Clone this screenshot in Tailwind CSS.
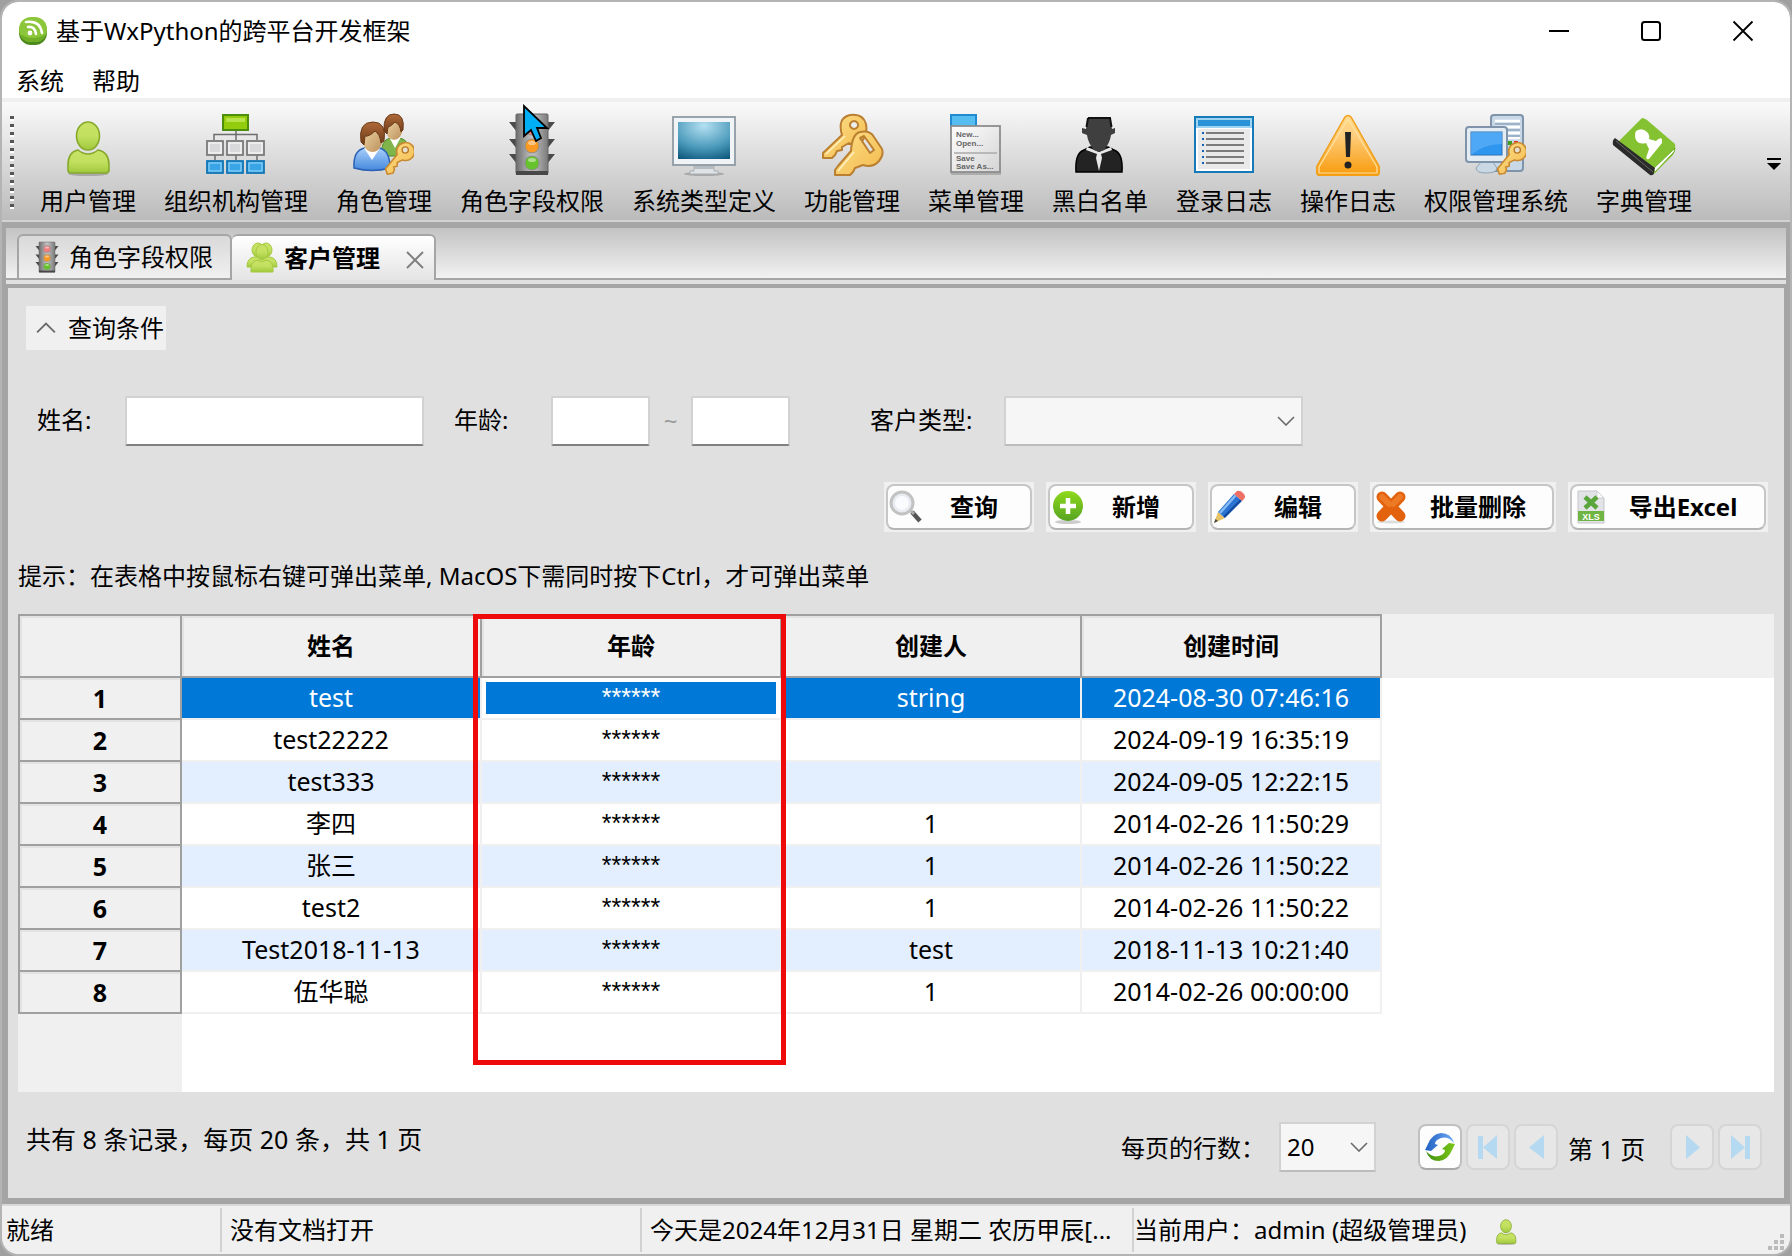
<!DOCTYPE html>
<html lang="zh-CN">
<head>
  <meta charset="utf-8">
  <title>基于WxPython的跨平台开发框架</title>
  <script src="https://cdn.jsdelivr.net/npm/@tailwindcss/browser@4"></script>
</head>
<body class="bg-[#a0a0a0] font-['Noto_Sans','Noto_Sans_CJK_SC',sans-serif] text-2xl leading-8 text-black">

  <!-- shared gradients and icons -->
  <svg class="absolute w-0 h-0" aria-hidden="true">
    <defs>
      <linearGradient id="gGreen" x1="0" y1="0" x2="0" y2="1"><stop offset="0" stop-color="#c9e265"/><stop offset=".5" stop-color="#c3e060"/><stop offset="1" stop-color="#a0c93c"/></linearGradient>
      <linearGradient id="gBlue" x1="0" y1="0" x2="0" y2="1"><stop offset="0" stop-color="#a9d0fb"/><stop offset="1" stop-color="#4387dc"/></linearGradient>
      <linearGradient id="gHair" x1="0" y1="0" x2="0" y2="1"><stop offset="0" stop-color="#b06a3a"/><stop offset="1" stop-color="#6b3a17"/></linearGradient>
      <linearGradient id="gFace" x1="0" y1="0" x2="1" y2="1"><stop offset="0" stop-color="#f3d9ac"/><stop offset="1" stop-color="#b98f58"/></linearGradient>
      <linearGradient id="gKey" x1="0" y1="0" x2="1" y2="1"><stop offset="0" stop-color="#fde08a"/><stop offset="1" stop-color="#f3b94c"/></linearGradient>
      <linearGradient id="gMetal" x1="0" y1="0" x2="1" y2="0"><stop offset="0" stop-color="#6d6d6d"/><stop offset=".5" stop-color="#c4c4c4"/><stop offset="1" stop-color="#7b7b7b"/></linearGradient>
      <radialGradient id="gScreen" cx=".5" cy=".1" r="1"><stop offset="0" stop-color="#b5e0f2"/><stop offset=".6" stop-color="#4b9abb"/><stop offset="1" stop-color="#0d587d"/></radialGradient>
      <linearGradient id="gWarn" x1="0" y1="0" x2="0" y2="1"><stop offset="0" stop-color="#ffd98a"/><stop offset=".3" stop-color="#ffcf80"/><stop offset="1" stop-color="#f79a0a"/></linearGradient>
      <linearGradient id="gPage" x1="0" y1="0" x2="1" y2="1"><stop offset="0" stop-color="#fff"/><stop offset="1" stop-color="#d4d4d4"/></linearGradient>
      <linearGradient id="gDisc" x1="0" y1="0" x2="0" y2="1"><stop offset="0" stop-color="#8fd91c"/><stop offset="1" stop-color="#56a322"/></linearGradient>
      <linearGradient id="gArrowBlue" x1="0" y1="0" x2="1" y2="0"><stop offset="0" stop-color="#1f5fc0"/><stop offset="1" stop-color="#6eaaf5"/></linearGradient>
      <linearGradient id="gArrowGreen" x1="0" y1="0" x2="1" y2="0"><stop offset="0" stop-color="#7cc818"/><stop offset="1" stop-color="#3f8d12"/></linearGradient>
    </defs>
    <symbol id="user" viewBox="0 0 64 64">
      <ellipse cx="32" cy="62" rx="20" ry="2" fill="#000" opacity=".2"/>
      <path d="M22 38 Q32 46 42 38 Q53 40 53 53 V58 Q53 61 50 61 H15 Q12 61 12 58 V53 Q12 40 22 38Z" fill="url(#gGreen)" stroke="#86a92c" stroke-width="1.6"/>
      <ellipse cx="32" cy="24" rx="11.5" ry="14" fill="url(#gGreen)" stroke="#86a92c" stroke-width="1.6"/>
    </symbol>
    <symbol id="traffic" viewBox="0 0 64 64">
      <g fill="#4a4a4a"><path d="M9 10 H17 V20 Z M9 27 H17 V37 Z M9 42 H17 V52 Z M55 10 H47 V20 Z M55 27 H47 V37 Z M55 42 H47 V52 Z"/></g>
      <rect x="16" y="2" width="32" height="60" rx="1" fill="url(#gMetal)" stroke="#666"/>
      <rect x="16" y="59" width="32" height="4" fill="#484848"/>
      <g stroke="#8b8b8b"><circle cx="32" cy="16" r="7" fill="#f08080"/><circle cx="32" cy="34" r="7" fill="#fb9a22"/><circle cx="32" cy="51" r="7" fill="#66c32c"/></g>
      <g fill="#fff" opacity=".45"><ellipse cx="32" cy="13" rx="4" ry="2"/><ellipse cx="32" cy="31" rx="4" ry="2"/><ellipse cx="32" cy="48" rx="4" ry="2"/></g>
    </symbol>
    <symbol id="key" viewBox="0 0 32 38">
      <path d="M14 14 L1 30 L3 36 L9 35 L11 31 L10 28 L14 27 L14 23 L20 20 A10 10 0 1 0 14 14Z" fill="url(#gKey)" stroke="#c98a31" stroke-width="1.8" stroke-linejoin="round"/>
      <circle cx="23" cy="9" r="3.5" fill="#e8e0cf" stroke="#b97a2c" stroke-width="1.5"/>
    </symbol>
    <symbol id="chevron" viewBox="0 0 18 10"><path d="M1 1 L9 9 L17 1" fill="none" stroke="#6a6a6a" stroke-width="1.6"/></symbol>
  </svg>

  <div class="min-h-screen p-0.5 flex">
    <div class="flex-1 min-w-0 flex flex-col rounded-2xl overflow-hidden bg-white outline-2 outline-[#b4b4b4]">

      <!-- title bar -->
      <header class="h-[58px] flex items-center justify-between pl-4 pr-9">
        <div class="flex items-center gap-2">
          <svg class="w-[30px] h-[30px]" viewBox="0 0 30 30">
            <rect x="1" y="3" width="28" height="26" rx="12" fill="#4d8a1d"/>
            <rect x="1" y="1" width="28" height="25" rx="12" fill="#8cc63a"/>
            <path d="M2 18 Q15 26 28 18 Q26 26 15 26 Q4 26 2 18Z" fill="#6fae25"/>
            <circle cx="12" cy="17" r="2.4" fill="#fff"/>
            <path d="M10 11 Q17 10 18 18 M8 6 Q22 4 24 17" fill="none" stroke="#fff" stroke-width="2.6" stroke-linecap="round"/>
          </svg>
          <h1>基于WxPython的跨平台开发框架</h1>
        </div>
        <div class="flex gap-[70px]">
          <button aria-label="最小化"><svg class="w-[22px] h-[22px]" viewBox="0 0 22 22"><path d="M1 11 H21" stroke="#000" stroke-width="2"/></svg></button>
          <button aria-label="最大化"><svg class="w-[22px] h-[22px]" viewBox="0 0 22 22"><rect x="2" y="2" width="18" height="18" rx="2.5" fill="none" stroke="#000" stroke-width="2"/></svg></button>
          <button aria-label="关闭"><svg class="w-[22px] h-[22px]" viewBox="0 0 22 22"><path d="M1.500 1.500 L20.500 20.500 M20.500 1.500 L1.500 20.500" stroke="#000" stroke-width="1.8"/></svg></button>
        </div>
      </header>

      <!-- menu bar -->
      <nav class="h-[42px] flex items-center gap-7 px-3.5 pt-1 border-b-4 border-[#f0f0f0]">
        <button>系统</button>
        <button>帮助</button>
      </nav>

      <!-- tool bar -->
      <div class="h-[120px] flex items-start bg-linear-to-b from-[#fafafa] to-[#bbbbbb] border-b-2 border-[#d2d2d2] pt-2.5">
        <div class="w-2 h-24 mt-1 ml-2 mr-2 bg-[repeating-linear-gradient(to_bottom,#555_0px,#555_3px,#fff_3px,#fff_5px,transparent_5px,transparent_8px)] border-r-4 border-transparent bg-clip-padding"></div>

        <button class="px-3.5 flex flex-col items-center gap-[9px]"><svg class="size-16"><use href="#user"/></svg>用户管理</button>

        <button class="px-3.5 flex flex-col items-center gap-[9px]">
          <svg class="size-16" viewBox="0 0 64 64">
            <path d="M32 18 V28 M10 28 V22.500 H53 V28 M11 43 V48 M32 43 V48 M53 43 V48" fill="none" stroke="#6d6d6d" stroke-width="1.5"/>
            <rect x="19" y="3" width="25" height="15" fill="#93cc0c" stroke="#4d8f0c" stroke-width="2"/><rect x="22" y="6" width="19" height="4" fill="#b9e34a"/>
            <g fill="#d9d9dc" stroke="#7b7b7b" stroke-width="1.8"><rect x="3" y="29" width="16" height="14"/><rect x="23" y="29" width="16" height="14"/><rect x="43" y="29" width="17" height="14"/></g>
            <g fill="none" stroke="#fff"><rect x="5" y="31" width="12" height="10"/><rect x="25" y="31" width="12" height="10"/><rect x="45" y="31" width="13" height="10"/></g>
            <g fill="#3aa5e6" stroke="#1576b4" stroke-width="1.8"><rect x="3" y="49" width="16" height="12"/><rect x="23" y="49" width="16" height="12"/><rect x="43" y="49" width="17" height="12"/></g>
            <g fill="none" stroke="#9bdafc"><rect x="5" y="51" width="12" height="8"/><rect x="25" y="51" width="12" height="8"/><rect x="45" y="51" width="13" height="8"/></g>
          </svg>组织机构管理</button>

        <button class="px-3.5 flex flex-col items-center gap-[9px]">
          <svg class="size-16" viewBox="0 0 64 64">
            <path d="M29 44 Q29 28 38 26 L43 32 L48 26 Q58 28 58 44Z" fill="#7fb54a" stroke="#4f8a25"/>
            <path d="M37 25 L43 36 L49 25Z" fill="#fff"/>
            <ellipse cx="42" cy="17" rx="8.500" ry="11" fill="url(#gFace)"/>
            <path d="M32 19 Q31 2 42 2 Q53 2 51 18 L49 20 Q48 12 43 10 Q38 15 36 15 L35 22Z" fill="url(#gHair)" stroke="#6b3a17"/>
            <path d="M2 56 Q1 38 13 36 L20 44 L27 36 Q38 38 38 56 Q20 61 2 56Z" fill="url(#gBlue)" stroke="#2b62b5" stroke-width="1.5"/>
            <path d="M12 36 L20 48 L28 36Z" fill="#fff"/>
            <ellipse cx="20.500" cy="27" rx="10" ry="13" fill="url(#gFace)"/>
            <path d="M9 30 Q6 10 21 10 Q35 10 32 29 L29 31 Q28 22 23 19 Q17 25 13 24 L12 33Z" fill="url(#gHair)" stroke="#6b3a17"/>
            <use href="#key" x="32" y="30" width="30" height="34"/>
          </svg>角色管理</button>

        <button class="relative px-3.5 flex flex-col items-center gap-[9px]">
          <svg class="size-16"><use href="#traffic"/></svg>角色字段权限
          <svg class="absolute left-[76px] -top-2 w-[28px] h-[40px]" viewBox="0 0 28 40"><path d="M2 2 L2 32 L9 26 L14 37 L19 34 L15 24 L25 24 Z" fill="#00aef5" stroke="#000" stroke-width="1.8"/></svg>
        </button>

        <button class="px-3.5 flex flex-col items-center gap-[9px]">
          <svg class="size-16" viewBox="0 0 64 64">
            <ellipse cx="32" cy="62" rx="20" ry="2" fill="#000" opacity=".2"/>
            <path d="M22 52 H42 V59 H46 V62 H18 V59 H22Z" fill="#dfe3e6" stroke="#a8afb4"/>
            <path d="M22 53 H42 V57 H22Z" fill="#b5bcc1"/>
            <rect x="1" y="5" width="62" height="48" fill="#f1f4f6" stroke="#8f9ba3" stroke-width="1.8"/>
            <rect x="6" y="10" width="52" height="37" fill="url(#gScreen)"/>
          </svg>系统类型定义</button>

        <button class="px-3.5 flex flex-col items-center gap-[9px]">
          <svg class="size-16" viewBox="0 0 64 64">
            <g stroke="#bb7f32" stroke-width="2" stroke-linejoin="round" fill="url(#gKey)" fill-rule="evenodd">
              <path d="M22 23 Q17 6 30 3 Q43 1 46 12 Q48 24 40 31 Q34 34 29 31 L22 35 V38 L17 39 L15 43 L12 46 H3 V41Z M34 9 A4 4 0 1 0 34.100 9Z"/>
              <path d="M31 39 Q32 22 40 20 Q50 18 54 25 L62 37 Q64 43 59 49 Q53 56 43 53 L35 56 L33 60 L30 63 H15 V58 L18 54Z M40 26 L44 24 L54 38 L50 41Z"/>
            </g>
            <path d="M34 40 L18 59 M25 24 L6 42" stroke="#fff2c0" stroke-width="1.5"/>
          </svg>功能管理</button>

        <button class="px-3.5 flex flex-col items-center gap-[9px]">
          <svg class="size-16" viewBox="0 0 64 64">
            <rect x="7" y="59" width="50" height="4" fill="#000" opacity=".18"/>
            <rect x="7" y="3" width="25" height="13" fill="#55bdf0" stroke="#1f8bd0" stroke-width="2"/>
            <rect x="7" y="14" width="49" height="46" fill="url(#gPage)" stroke="#8d8d8d" stroke-width="1.8"/>
            <path d="M10 41 H53" stroke="#aaa" stroke-width="1.5"/>
            <g font-family="Liberation Sans, sans-serif" font-size="8" font-weight="bold" fill="#666"><text x="12" y="25">New...</text><text x="12" y="34">Open...</text><text x="12" y="49">Save</text><text x="12" y="57">Save As...</text></g>
          </svg>菜单管理</button>

        <button class="px-3.5 flex flex-col items-center gap-[9px]">
          <svg class="size-16" viewBox="0 0 64 64">
            <path d="M8 60 Q7 43 14 39 L22 35 H40 L48 39 Q55 43 54 60Z" fill="#232323" stroke="#000" stroke-width="1.500"/>
            <path d="M19 35 L31 40 L43 35 L44 38 L33 42 L34 46 L31 59 L28 46 L29 42 L18 38Z" fill="#e8e8e8"/>
            <path d="M20 6 H42 L44 17 L47 16 V21 L43 23 Q42 31 36 38 L31 40 L26 38 Q20 31 19 23 L14 21 V16 L18 17Z" fill="#3f3f3f"/>
            <path d="M20 6 H42 L43.500 15 M20 6 L18.500 15" fill="none" stroke="#111" stroke-width="2"/>
          </svg>黑白名单</button>

        <button class="px-3.5 flex flex-col items-center gap-[9px]">
          <svg class="size-16" viewBox="0 0 64 64">
            <rect x="3" y="5" width="58" height="55" fill="#fff" stroke="#1679b8" stroke-width="2"/>
            <rect x="4" y="6" width="56" height="10" fill="#9dd3f3"/><rect x="6" y="8" width="52" height="6" fill="#2a93d8"/>
            <rect x="6" y="17" width="52" height="40" fill="#e9e9e9"/>
            <path d="M14 21 H52 M14 27 H52 M14 33 H52 M14 39 H52 M14 45 H52 M14 51 H52" stroke="#7c7c7c" stroke-width="1.8"/>
            <path d="M10 21 H12 M10 27 H12 M10 33 H12 M10 39 H12 M10 45 H12 M10 51 H12" stroke="#1461ad" stroke-width="2"/>
          </svg>登录日志</button>

        <button class="px-3.5 flex flex-col items-center gap-[9px]">
          <svg class="size-16" viewBox="0 0 64 64">
            <path d="M29 5 Q32 2 35 5 L63 54 Q65 63 60 64 H4 Q-1 63 1 54Z" fill="url(#gWarn)" stroke="#f1a01c" stroke-width="1.5"/>
            <path d="M32 7 L61 55 V61 H3 V55Z" fill="none" stroke="#ffe2a0" stroke-width="1.2"/>
            <path d="M29 20 H35 L34 45 H30Z" fill="#222"/><circle cx="32" cy="53" r="3.500" fill="#222"/>
          </svg>操作日志</button>

        <button class="px-3.5 flex flex-col items-center gap-[9px]">
          <svg class="size-16" viewBox="0 0 64 64">
            <rect x="27" y="3" width="32" height="56" rx="3" fill="#c8d8e7" stroke="#7f93ab" stroke-width="2"/>
            <path d="M31 9 H56 M31 15 H56 M31 21 H56 M40 26 H56" stroke="#fff" stroke-width="2.500"/><path d="M31 12 H56 M31 18 H56 M40 24 H56" stroke="#8fa5bd" stroke-width="1.500"/>
            <rect x="44" y="29" width="4" height="4" fill="#3d9d1e"/><rect x="50" y="29" width="4" height="4" fill="#e0312b"/>
            <path d="M18 49 H28 L33 56 Q33 61 22 61 Q12 61 12 56Z" fill="#c9d8e2" stroke="#8da3b3"/>
            <rect x="2" y="15" width="41" height="35" rx="3" fill="#e4ecf3" stroke="#7f93ab" stroke-width="2"/>
            <rect x="7" y="20" width="31" height="23" fill="#2f96ef" stroke="#2b6eb8"/><path d="M7 20 H38 V32 Q20 32 7 43Z" fill="#65b4f8" opacity=".6"/>
            <use href="#key" x="32" y="30" width="30" height="34"/>
          </svg>权限管理系统</button>

        <button class="px-3.5 flex flex-col items-center gap-[9px]">
          <svg class="size-16" viewBox="0 0 64 64">
            <path d="M30 6 Q32 6 35 8 L63 32 Q64 40 60 44 L42 62 L4 32Z" fill="#85c232"/>
            <path d="M41 57 L63 36 L62 40 L43 60Z" fill="#fff" stroke="#6fae25"/>
            <path d="M3 26 Q0 28 1 33 L38 63 Q42 64 42 60 L43 56Z" fill="#2b2b2b"/><path d="M4 29 L41 60" stroke="#666"/>
            <path d="M24 19 Q30 15 35 20 Q38 23 37 27 L44 29 Q48 25 50 27 L50 31 L37 47 Q33 48 35 43 L37 37 L34 31 Q27 33 24 28 Q22 23 24 19Z" fill="#fff"/>
          </svg>字典管理</button>

        <button class="ml-auto mr-2 mt-11 mb-auto" aria-label="更多"><svg class="w-4 h-4" viewBox="0 0 16 16"><path d="M1 3 H15" stroke="#000" stroke-width="2"/><path d="M1 7 H15 L8 14Z" fill="#000"/></svg></button>
      </div>

      <!-- tabs -->
      <div class="h-[66px] bg-[#e0e0e0] border-t-[6px] border-x-4 border-b-4 border-[#a5a5a5]">
        <div class="h-[52px] flex items-end pl-[11px] bg-linear-to-b from-[#c3c3c3] to-[#f2f2f2] border-b-2 border-[#a5a5a5]">
          <button class="h-11 flex items-center gap-1.5 pl-3 pr-[17px] rounded-t-md border-2 border-b-0 border-[#a5a5a5] bg-linear-to-b from-[#d9d9d9] to-[#f0f0f0]">
            <svg class="size-8"><use href="#traffic"/></svg>角色字段权限
          </button>
          <button class="h-[46px] -mb-0.5 flex items-center gap-1.5 pl-3.5 pr-2.5 rounded-t-md border-2 border-l-0 border-b-0 border-[#a5a5a5] bg-linear-to-b from-white to-[#e4e4e4] font-bold">
            <svg class="size-8" viewBox="0 0 32 32">
              <g fill="url(#gGreen)" stroke="#a5c843">
                <ellipse cx="12" cy="8" rx="6" ry="7"/><ellipse cx="20" cy="8" rx="6" ry="7"/>
                <path d="M1 25 Q1 16 8 15 H24 Q31 16 31 25Z"/>
                <ellipse cx="16" cy="10" rx="6" ry="7.500"/><path d="M5 30 Q4 20 11 18 Q16 21 21 18 Q28 20 27 30Z"/>
              </g>
            </svg>客户管理
            <svg class="ml-5 mt-1 size-[18px]" viewBox="0 0 18 18"><path d="M1 1 L17 17 M17 1 L1 17" stroke="#808080" stroke-width="2"/></svg>
          </button>
        </div>
      </div>

      <!-- page -->
      <main class="flex-1 flex flex-col bg-[#e0e0e0] border-x-[6px] border-b-[6px] border-[#a5a5a5] pt-[18px]">
        <div class="ml-[18px]">
          <button class="h-11 flex items-center gap-3 pl-2.5 pr-0.5 bg-[#f0f0f0]">
            <svg class="w-5 h-3 rotate-180"><use href="#chevron"/></svg>查询条件
          </button>
        </div>

        <form class="mt-[46px] flex items-center pl-[29px]">
          <label for="name" class="w-[88px] pb-0.5">姓名:</label>
          <input id="name" type="text" class="w-[299px] h-[50px] px-2 bg-white rounded-xs border-2 border-[#d2d2d2] border-b-[#808080]">
          <label for="ageFrom" class="ml-[30px] w-[97px] pb-0.5">年龄:</label>
          <input id="ageFrom" type="text" class="w-[99px] h-[50px] px-2 bg-white rounded-xs border-2 border-[#d2d2d2] border-b-[#808080]">
          <span class="w-[41px] text-center text-[#999]">~</span>
          <input id="ageTo" aria-label="年龄上限" type="text" class="w-[99px] h-[50px] px-2 bg-white rounded-xs border-2 border-[#d2d2d2] border-b-[#808080]">
          <label for="type" class="ml-20 w-[134px] pb-0.5">客户类型:</label>
          <div class="relative">
            <select id="type" class="block appearance-none w-[299px] h-[50px] px-2 bg-[#f6f6f6] border-2 border-[#d2d2d2] border-b-[#bcbcbc]"><option></option></select>
            <svg class="absolute right-2 top-5 w-[18px] h-[10px] pointer-events-none"><use href="#chevron"/></svg>
          </div>
        </form>

        <div class="mt-9 pr-4 flex justify-end gap-3 font-bold">
          <div class="p-0.5 bg-[#f0f0f0]"><button class="w-[146px] h-[46px] pr-1.5 flex items-center bg-[#fdfdfd] rounded-lg border-2 border-[#c6c6c6] border-b-[#b5b5b5]">
            <svg class="size-9" viewBox="0 0 36 36"><path d="M24 23 L32 32" stroke="#555" stroke-width="4.500"/><path d="M22 21 L26 25" stroke="#aaa" stroke-width="3"/><circle cx="14" cy="14" r="11" fill="#e9ebf2" stroke="#c2c2c2" stroke-width="3"/><circle cx="14" cy="14" r="7" fill="#fafbfd"/></svg>
            <span class="flex-1 text-center">查询</span></button></div>
          <div class="p-0.5 bg-[#f0f0f0]"><button class="w-[146px] h-[46px] pr-1.5 flex items-center bg-[#fdfdfd] rounded-lg border-2 border-[#c6c6c6] border-b-[#b5b5b5]">
            <svg class="size-9" viewBox="0 0 36 36"><ellipse cx="18" cy="33" rx="13" ry="2" fill="#ccc"/><circle cx="18" cy="17" r="15" fill="url(#gDisc)"/><path d="M18 9 V25 M10 17 H26" stroke="#fff" stroke-width="4.500"/></svg>
            <span class="flex-1 text-center">新增</span></button></div>
          <div class="p-0.5 bg-[#f0f0f0]"><button class="w-[146px] h-[46px] pr-1.5 flex items-center bg-[#fdfdfd] rounded-lg border-2 border-[#c6c6c6] border-b-[#b5b5b5]">
            <svg class="size-9" viewBox="0 0 36 36"><path d="M2 34 L6 23 L13 29Z" fill="#e8c266"/><path d="M2 34 L3.500 30 L6 32Z" fill="#444"/><path d="M6 23 L22 5 L30 12 L13 29Z" fill="#2a73d2"/><path d="M8 24 L24 6" stroke="#85baf4" stroke-width="2.500"/><path d="M12 28 L29 11" stroke="#12479a" stroke-width="2"/><path d="M22 5 L25 2 Q29 1 32 5 Q34 8 32 10 L30 12Z" fill="#ee7064"/></svg>
            <span class="flex-1 text-center">编辑</span></button></div>
          <div class="p-0.5 bg-[#f0f0f0]"><button class="w-[182px] h-[46px] pr-1.5 flex items-center bg-[#fdfdfd] rounded-lg border-2 border-[#c6c6c6] border-b-[#b5b5b5]">
            <svg class="size-9" viewBox="0 0 36 36"><ellipse cx="17" cy="33" rx="14" ry="1.500" fill="#ddd"/><path d="M8 8 L26 27 M26 8 L8 27" stroke="#e2620e" stroke-width="11" stroke-linecap="round"/><path d="M8 8 L15 15 M26 8 L19 15" stroke="#ee7a26" stroke-width="6" stroke-linecap="round"/></svg>
            <span class="flex-1 text-center">批量删除</span></button></div>
          <div class="p-0.5 bg-[#f0f0f0]"><button class="w-[196px] h-[46px] pr-1.5 flex items-center bg-[#fdfdfd] rounded-lg border-2 border-[#c6c6c6] border-b-[#b5b5b5]">
            <svg class="size-9" viewBox="0 0 36 36"><path d="M6 2 H25 L32 9 V34 H6Z" fill="#e2e3e6" stroke="#c4c5c8"/><path d="M25 2 V9 H32Z" fill="#fff" stroke="#ccc"/><path d="M13 8 L25 19 M25 8 L13 19" stroke="#5aa63c" stroke-width="4.500"/><rect x="6" y="22" width="26" height="10" fill="#6fb544"/><text x="19" y="30.500" text-anchor="middle" font-family="Liberation Sans, sans-serif" font-size="9" font-weight="bold" fill="#fff">XLS</text></svg>
            <span class="flex-1 text-center">导出Excel</span></button></div>
        </div>

        <p class="mt-7 pl-2.5">提示：在表格中按鼠标右键可弹出菜单, MacOS下需同时按下Ctrl，才可弹出菜单</p>

        <!-- grid -->
        <div class="relative mt-[22px] mx-2.5 flex-1 bg-[linear-gradient(to_right,#f0f0f0_164px,transparent_164px),linear-gradient(to_bottom,#f0f0f0_64px,#ffffff_64px)]">
          <table class="table-fixed w-[1364px] border-separate border-spacing-0 text-center">
            <thead>
              <tr class="h-16">
                <th class="w-[164px] border-2 border-[#a0a0a0] bg-[#f0f0f0] shadow-[inset_2px_2px_#e3e3e3]"></th>
                <th class="border-y-2 border-r-2 border-[#a0a0a0] bg-[#f0f0f0] shadow-[inset_2px_2px_#e3e3e3]">姓名</th>
                <th class="border-y-2 border-r-2 border-[#a0a0a0] bg-[#f0f0f0] shadow-[inset_2px_2px_#e3e3e3]">年龄</th>
                <th class="border-y-2 border-r-2 border-[#a0a0a0] bg-[#f0f0f0] shadow-[inset_2px_2px_#e3e3e3]">创建人</th>
                <th class="border-y-2 border-r-2 border-[#a0a0a0] bg-[#f0f0f0] shadow-[inset_2px_2px_#e3e3e3]">创建时间</th>
              </tr>
            </thead>
            <tbody id="rows"></tbody>
          </table>
          <div class="absolute left-[455px] top-0 w-[313px] h-[451px] border-5 border-[#ee0a0a] pointer-events-none"></div>
        </div>

        <div class="h-[106px] flex items-center pl-[18px] pr-[22px]">
          <p class="mr-auto -mt-3 text-[25px]">共有 8 条记录，每页 20 条，共 1 页</p>
          <label for="pageSize" class="mt-1.5">每页的行数：</label>
          <div class="relative mt-1 ml-3.5 mr-[42px]">
            <select id="pageSize" class="block appearance-none w-[97px] h-[50px] pl-1.5 bg-[#f6f6f6] border-2 border-[#d2d2d2] border-b-[#bcbcbc]"><option>20</option></select>
            <svg class="absolute right-2 top-5 w-[18px] h-[10px] pointer-events-none"><use href="#chevron"/></svg>
          </div>
          <div class="mt-1 flex items-center gap-1">
            <button aria-label="刷新" class="w-11 h-[46px] flex items-center justify-center bg-[#fdfdfd] rounded-lg border-2 border-[#c0c0c0] border-b-[#a8a8a8]">
              <svg class="size-8" viewBox="0 0 32 32">
                <path d="M7 20 L1 19 L4 13 Q8 3 17 2 Q27 2 30 12 Q24 5 17 7 Q11 9 11 13 L14 14Z" fill="url(#gArrowBlue)"/>
                <path d="M7 20 L1 19 L4 13 Q8 3 17 2 Q27 2 30 12 Q24 5 17 7 Q11 9 11 13 L14 14Z" fill="url(#gArrowGreen)" transform="rotate(180 16 16)"/>
              </svg>
            </button>
            <button aria-label="首页" disabled class="w-11 h-[46px] flex items-center justify-center bg-[#e7e7e7] rounded-lg border-2 border-[#d5d5d5]"><svg class="size-8" viewBox="0 0 32 32" fill="#b4d9f0"><rect x="6" y="5" width="5" height="23"/><path d="M25 4 V28 L11 16.500Z"/></svg></button>
            <button aria-label="上一页" disabled class="w-11 h-[46px] flex items-center justify-center bg-[#e7e7e7] rounded-lg border-2 border-[#d5d5d5]"><svg class="size-8" viewBox="0 0 32 32" fill="#b4d9f0"><path d="M24 4 V28 L9 16.500Z"/></svg></button>
            <span class="w-[100px] mr-1 pl-1.5 mt-1 text-[25px] whitespace-nowrap">第 1 页</span>
            <button aria-label="下一页" disabled class="w-11 h-[46px] flex items-center justify-center bg-[#e7e7e7] rounded-lg border-2 border-[#d5d5d5]"><svg class="size-8" viewBox="0 0 32 32" fill="#b4d9f0"><path d="M10 4 V28 L24 16.500Z"/></svg></button>
            <button aria-label="末页" disabled class="w-11 h-[46px] flex items-center justify-center bg-[#e7e7e7] rounded-lg border-2 border-[#d5d5d5]"><svg class="size-8" viewBox="0 0 32 32" fill="#b4d9f0"><rect x="21" y="5" width="5" height="23"/><path d="M7 4 V28 L21 16.500Z"/></svg></button>
          </div>
        </div>
      </main>

      <!-- status bar -->
      <footer class="h-[50px] flex items-stretch bg-[#f0f0f0] border-t-2 border-[#d8d8d8] py-0.5">
        <div class="w-[220px] pl-1 flex items-center border-r-2 border-[#d2d2d2]">就绪</div>
        <div class="w-[420px] pl-2 flex items-center border-r-2 border-[#d2d2d2]">没有文档打开</div>
        <div class="w-[492px] pl-2 flex items-center border-r-2 border-[#d2d2d2] whitespace-nowrap">今天是2024年12月31日 星期二 农历甲辰[...</div>
        <div class="flex-1 flex items-center gap-6">当前用户：admin (超级管理员)<svg class="w-8 h-[30px]"><use href="#user"/></svg></div>
        <svg class="w-5 h-5 mt-auto mr-1" viewBox="0 0 20 20" fill="#bbb"><path d="M14 2h4v4h-4z M8 8h4v4H8z M14 8h4v4h-4z M2 14h4v4H2z M8 14h4v4H8z M14 14h4v4h-4z"/></svg>
      </footer>
    </div>
  </div>

  <script>
    const customers = [
      ["test", "string", "2024-08-30 07:46:16"],
      ["test22222", "", "2024-09-19 16:35:19"],
      ["test333", "", "2024-09-05 12:22:15"],
      ["李四", "1", "2014-02-26 11:50:29"],
      ["张三", "1", "2014-02-26 11:50:22"],
      ["test2", "1", "2014-02-26 11:50:22"],
      ["Test2018-11-13", "test", "2018-11-13 10:21:40"],
      ["伍华聪", "1", "2014-02-26 00:00:00"]
    ];

    const rows = document.getElementById("rows");
    customers.forEach((c, i) => {
      const selected = i === 0;
      const bg = selected ? "bg-[#0078d7] text-white" : i % 2 ? "bg-white" : "bg-[#e3eeff]";
      const age = selected ? "bg-[#0078d7] text-white shadow-[inset_0_0_0_4px_#ffffff]" : bg;
      const cell = "p-0 pb-0.5 leading-8 border-r-2 border-b-2 border-[#f0f0f0]";
      rows.innerHTML += `
        <tr class="h-[42px] text-[25px]">
          <th scope="row" class="p-0 leading-8 border-x-2 border-b-2 border-[#a0a0a0] bg-[#f0f0f0] shadow-[inset_2px_2px_#e3e3e3]">${i + 1}</th>
          <td class="${cell} ${bg}">${c[0]}</td>
          <td class="${cell} ${age} font-['Liberation_Sans',sans-serif]">******</td>
          <td class="${cell} ${bg}">${c[1]}</td>
          <td class="${cell} ${bg}">${c[2]}</td>
        </tr>
      `;
    });
  </script>
</body>
</html>
